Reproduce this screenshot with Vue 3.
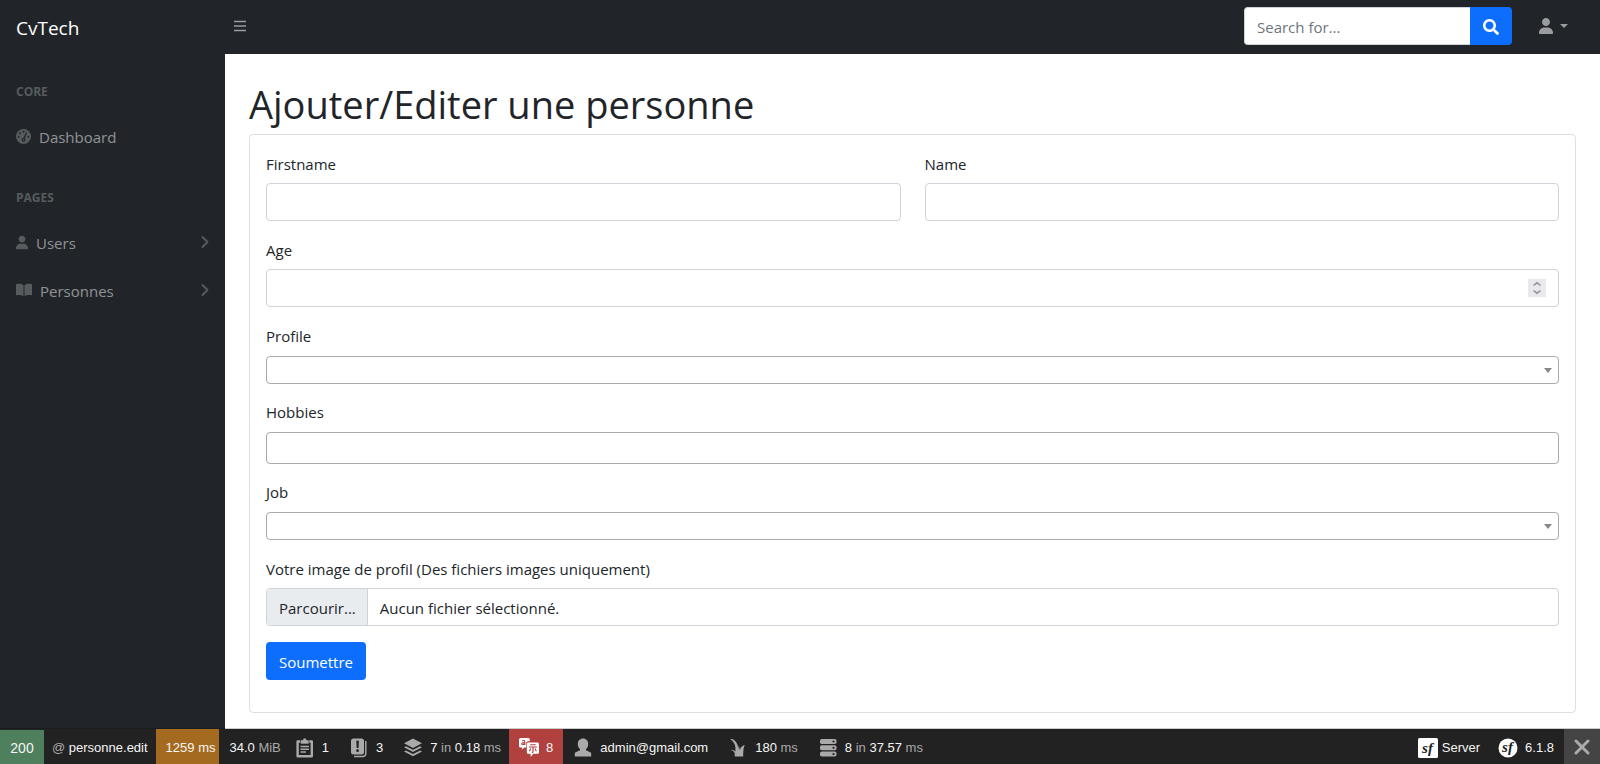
<script setup>
import { ref } from 'vue'

const query = ref('')
const firstname = ref('')
const name = ref('')
const age = ref('')
const profile = ref('')
const hobbies = ref('')
const job = ref('')
</script>

<template>
  <div class="page">
    <header class="topbar">
      <a class="brand" href="#">CvTech</a>
      <button class="menu-toggle" type="button" aria-label="Menu">
        <svg width="12" height="12" viewBox="0 0 12 12"><path d="M0 1.500h12M0 6h12M0 10.500h12" stroke="currentColor" stroke-width="1.400" /></svg>
      </button>
      <form class="search" role="search" @submit.prevent>
        <input v-model="query" type="text" placeholder="Search for..." aria-label="Search for..." />
        <button type="submit" aria-label="Search">
          <svg width="16" height="16" viewBox="0 0 512 512"><path fill="currentColor" d="M505 442.700L405.300 343c-4.500-4.500-10.600-7-17-7H372c27.600-35.300 44-79.700 44-128C416 93.100 322.900 0 208 0S0 93.100 0 208s93.100 208 208 208c48.300 0 92.700-16.400 128-44v16.300c0 6.400 2.500 12.500 7 17l99.700 99.700c9.400 9.400 24.600 9.400 33.900 0l28.300-28.300c9.400-9.400 9.400-24.600.1-34zM208 336c-70.700 0-128-57.200-128-128 0-70.700 57.200-128 128-128 70.700 0 128 57.200 128 128 0 70.700-57.200 128-128 128z" /></svg>
        </button>
      </form>
      <button class="account" type="button" aria-label="Account">
        <svg width="14" height="16" viewBox="0 0 448 512"><path fill="currentColor" d="M224 256c70.700 0 128-57.310 128-128s-57.300-128-128-128C153.300 0 96 57.310 96 128S153.300 256 224 256zM274.700 304H173.300C77.610 304 0 381.600 0 477.300c0 19.140 15.520 34.670 34.660 34.670h378.700C432.500 512 448 496.500 448 477.300C448 381.600 370.400 304 274.700 304z" /></svg>
        <svg class="caret" width="8" height="4" viewBox="0 0 8 4"><path fill="currentColor" d="M0 0h8L4 4z" /></svg>
      </button>
    </header>

    <div class="body">
      <nav class="sidebar">
        <div class="heading">CORE</div>
        <a class="link" href="#">
          <svg width="15" height="15" viewBox="0 0 14 14">
            <circle cx="7" cy="7" r="7" fill="currentColor" />
            <g fill="#212529"><circle cx="7" cy="2.600" r=".9" /><circle cx="3.800" cy="4" r=".9" /><circle cx="2.500" cy="7.200" r=".9" /><circle cx="11.500" cy="7.200" r=".9" /><circle cx="7" cy="10" r="1.800" /></g>
            <path d="M7.200 9.500L9.700 3.800" stroke="#212529" stroke-width="1.200" stroke-linecap="round" />
            <circle cx="7" cy="10" r=".7" fill="currentColor" />
          </svg>
          <span>Dashboard</span>
        </a>
        <div class="heading">PAGES</div>
        <a class="link" href="#">
          <svg width="12" height="15" viewBox="0 0 448 512"><path fill="currentColor" d="M224 256c70.700 0 128-57.310 128-128s-57.300-128-128-128C153.300 0 96 57.310 96 128S153.300 256 224 256zM274.700 304H173.300C77.610 304 0 381.600 0 477.300c0 19.140 15.520 34.670 34.660 34.670h378.700C432.500 512 448 496.500 448 477.300C448 381.600 370.400 304 274.700 304z" /></svg>
          <span>Users</span>
          <svg class="chevron" width="8" height="14" viewBox="0 0 8 14"><path d="M1.500 2L6.500 7L1.500 12" fill="none" stroke="currentColor" stroke-width="1.800" stroke-linecap="round" stroke-linejoin="round" /></svg>
        </a>
        <a class="link" href="#">
          <svg width="16" height="14" viewBox="0 0 16 14"><path fill="currentColor" d="M7.500 2v11C5.700 12.100 3 12 .8 12.200Q0 12.200 0 11.500V1.700Q0 1 .8.900C3 .7 5.700.9 7.500 2zM8.500 2v11c1.800-.9 4.500-1 6.700-.8q.8 0 .8-.7V1.700Q16 1 15.200.9C13 .7 10.300.9 8.500 2z" /></svg>
          <span>Personnes</span>
          <svg class="chevron" width="8" height="14" viewBox="0 0 8 14"><path d="M1.500 2L6.500 7L1.500 12" fill="none" stroke="currentColor" stroke-width="1.800" stroke-linecap="round" stroke-linejoin="round" /></svg>
        </a>
      </nav>

      <main class="content">
        <h1>Ajouter/Editer une personne</h1>
        <form class="card" @submit.prevent>
          <div class="group">
            <div class="columns">
              <div class="field">
                <label for="firstname">Firstname</label>
                <input id="firstname" v-model="firstname" class="control" type="text" />
              </div>
              <div class="field">
                <label for="name">Name</label>
                <input id="name" v-model="name" class="control" type="text" />
              </div>
            </div>
            <div class="field">
              <label for="age">Age</label>
              <div class="control number">
                <input id="age" v-model="age" type="number" />
                <svg class="spinner" width="18" height="18" viewBox="0 0 18 18" aria-hidden="true"><path d="M5.500 6.500L9 3.800L12.500 6.500M5.500 11.500L9 14.200L12.500 11.500" fill="none" stroke="#8f8f9d" stroke-width="1.500" /></svg>
              </div>
            </div>
          </div>
          <div class="group">
            <div class="field">
              <label for="profile">Profile</label>
              <div class="picker">
                <select id="profile" v-model="profile"><option value=""></option></select>
                <svg width="8" height="5" viewBox="0 0 8 5" aria-hidden="true"><path d="M0 0h8L4 5z" fill="#888" /></svg>
              </div>
            </div>
            <div class="field">
              <label for="hobbies">Hobbies</label>
              <input id="hobbies" v-model="hobbies" class="tags" type="text" />
            </div>
            <div class="field">
              <label for="job">Job</label>
              <div class="picker">
                <select id="job" v-model="job"><option value=""></option></select>
                <svg width="8" height="5" viewBox="0 0 8 5" aria-hidden="true"><path d="M0 0h8L4 5z" fill="#888" /></svg>
              </div>
            </div>
            <div class="field">
              <label for="picture">Votre image de profil (Des fichiers images uniquement)</label>
              <label class="control file">
                <input id="picture" type="file" accept="image/*" />
                <span class="browse">Parcourir...</span>
                <span class="chosen">Aucun fichier sélectionné.</span>
              </label>
            </div>
            <button class="submit" type="submit">Soumettre</button>
          </div>
        </form>
      </main>
    </div>

    <footer class="toolbar">
      <a class="status" href="#">200</a>
      <a class="block tight" href="#"><span><i>@</i> personne.edit</span></a>
      <a class="block plain time" href="#">1259 ms</a>
      <a class="block plain" href="#"><span>34.0 <i>MiB</i></span></a>
      <a class="block" href="#">
        <svg width="24" height="24" viewBox="0 0 24 24">
          <path d="M4.600 5.500h14.200v14.700H4.600z" fill="none" stroke="#aaa" stroke-width="2.400" stroke-linejoin="round" />
          <path d="M7.500 4h2.300q0-2 1.900-2t1.900 2h2.300v4H7.500z" fill="#aaa" stroke="#222" stroke-width=".6" />
          <path d="M7.500 10.500h8.400M7.500 13.300h8.400M7.500 16.100h5.500" stroke="#aaa" stroke-width="1.500" />
        </svg>
        <span>1</span>
      </a>
      <a class="block" href="#">
        <svg width="24" height="24" viewBox="0 0 24 24">
          <rect x="4" y="2.500" width="13" height="16" rx="2.500" fill="#aaa" />
          <path d="M18.800 5v12.500q0 3-3 3H7" fill="none" stroke="#aaa" stroke-width="1.400" />
          <path d="M9.300 4.800h2.600l-.4 7.200h-1.800z" fill="#222" /><circle cx="10.600" cy="14.700" r="1.400" fill="#222" />
        </svg>
        <span>3</span>
      </a>
      <a class="block tight" href="#">
        <svg width="24" height="24" viewBox="0 0 24 24" fill="#aaa">
          <path d="M12 2.500l9 4.700l-9 4.700l-9-4.700z" /><path d="M3 11.300l2-1.100l7 3.600l7-3.600l2 1.100l-9 4.700z" /><path d="M3 15.600l2-1.100l7 3.600l7-3.600l2 1.100l-9 4.700z" />
        </svg>
        <span>7 <i>in</i> 0.18 <i>ms</i></span>
      </a>
      <a class="block alert" href="#">
        <svg width="24" height="24" viewBox="0 0 24 24">
          <path d="M3.500 2h7.800q1.500 0 1.500 1.500v1.800h-1.600q-2 0-2 2v4.200H7.400L5 13.600v-2.100H3.500Q2 11.500 2 10V3.500Q2 2 3.500 2z" fill="#fff" />
          <path d="M11.300 6.500h9.200q1.500 0 1.500 1.500v8.200q0 1.500-1.500 1.500h-4.200l-2.700 3.300v-3.300h-2.300q-1.500 0-1.500-1.500V8q0-1.500 1.500-1.500z" fill="#fff" />
          <path d="M5 5q2.800-1.400 2.800 1.200v2.700M7.800 6.600Q4.500 6.600 4.700 8t3-.1M13.200 8.800h5.500M11.900 11h8M16 11v5q0 .6-1.200.3M13.800 12.500l-1.400 2.700M18 12.500l1.400 2.700" fill="none" stroke="#b0413e" stroke-width="1.100" />
        </svg>
        <span>8</span>
      </a>
      <a class="block" href="#">
        <svg width="24" height="24" viewBox="0 0 24 24"><path fill="#aaa" d="M12 2.500c3.200 0 5.200 2.300 5.200 5.500 0 2.300-.9 4.100-2.200 5.100v1.200l4.300 1.900q.9.400.9 1.500v2.800H3.800v-2.800q0-1.100.9-1.500L9 14.300v-1.200C7.700 12.100 6.800 10.300 6.800 8c0-3.200 2-5.500 5.200-5.500z" /></svg>
        <span>admin@gmail.com</span>
      </a>
      <a class="block" href="#">
        <svg width="24" height="24" viewBox="0 0 24 24"><path fill="#aaa" d="M4.300 3.200Q6.500 2.600 8.300 4.300Q12 7.300 12.200 13q.4-1.500.1-3.500q1.300 1.700 1.500 5.300q.6-4.600 5.100-5.700q-1.500 2-1.700 8.400v3H8.700v-3.200q-1-3-4.400-3.400q3.200-.9 5.200 1.700Q10.300 6.500 4.300 3.200z" /></svg>
        <span>180 <i>ms</i></span>
      </a>
      <a class="block" href="#">
        <svg width="24" height="24" viewBox="0 0 24 24">
          <g fill="#aaa"><rect x="4" y="3" width="16.500" height="5" rx="1.800" /><rect x="4" y="9.300" width="16.500" height="5" rx="1.800" /><rect x="4" y="15.600" width="16.500" height="5" rx="1.800" /></g>
          <g fill="#222"><circle cx="17.500" cy="5.500" r="1.100" /><circle cx="17.500" cy="11.800" r="1.100" /><circle cx="17.500" cy="18.100" r="1.100" /></g>
        </svg>
        <span>8 <i>in</i> 37.57 <i>ms</i></span>
      </a>
      <a class="block tight server" href="#">
        <svg width="20" height="20" viewBox="0 0 20 20"><rect width="20" height="20" rx="1.500" fill="#fff" /><text x="9.500" y="14.500" text-anchor="middle" class="mark">sf</text></svg>
        <span>Server</span>
      </a>
      <a class="block" href="#">
        <svg width="24" height="24" viewBox="0 0 24 24"><circle cx="12" cy="12" r="9.500" fill="#fff" /><text x="11.500" y="16" text-anchor="middle" class="mark">sf</text></svg>
        <span>6.1.8</span>
      </a>
      <button class="close" type="button" aria-label="Close">
        <svg width="16" height="16" viewBox="0 0 16 16"><path d="M2 2l12 12M14 2L2 14" stroke="#aaa" stroke-width="3" stroke-linecap="round" /></svg>
      </button>
    </footer>
  </div>
</template>

<style>
body {
  margin: 0;
}
</style>

<style scoped>
* {
  box-sizing: border-box;
}
.page {
  display: flex;
  flex-direction: column;
  min-height: 100vh;
  font-family: "Open Sans", "Noto Sans", sans-serif;
  font-size: 15px;
  line-height: 24px;
  color: #212529;
  background: #fff;
}
a {
  color: inherit;
  text-decoration: none;
}
button,
input,
select {
  font: inherit;
  color: inherit;
  margin: 0;
}
button {
  border: 0;
  cursor: pointer;
}
svg {
  display: block;
  flex: none;
}
.topbar {
  display: flex;
  align-items: center;
  height: 54px;
  padding: 0 24px 2px 0;
  background: #212529;
  color: rgba(255, 255, 255, 0.55);
}
.brand {
  width: 225px;
  padding: 4px 0 0 16px;
  font-size: 19px;
  color: #fff;
}
.menu-toggle {
  padding: 8px 9px;
  background: none;
}
.search {
  display: flex;
  width: 268px;
  height: 38px;
  margin: 0 16px 0 auto;
}
.search input {
  flex: 1;
  min-width: 0;
  padding: 2px 12px 0;
  border: 1px solid #ced4da;
  border-right: 0;
  border-radius: 4px 0 0 4px;
  background: #fff;
  color: #212529;
}
.search input::placeholder {
  color: #6c757d;
  opacity: 1;
}
.search button {
  display: flex;
  align-items: center;
  justify-content: center;
  width: 42px;
  padding: 2px 0 0;
  border-radius: 0 4px 4px 0;
  background: #0d6efd;
  color: #fff;
}
.account {
  display: flex;
  align-items: center;
  gap: 7px;
  padding: 8px 8px 8px 11px;
  background: none;
}
.body {
  display: flex;
  flex: 1;
}
.sidebar {
  flex: none;
  width: 225px;
  background: #212529;
}
.heading {
  padding: 29px 16px 11px;
  font-size: 12px;
  line-height: 18px;
  font-weight: 700;
  color: rgba(255, 255, 255, 0.25);
}
.link {
  display: flex;
  align-items: center;
  gap: 8px;
  height: 48px;
  padding: 0 16px;
  color: rgba(255, 255, 255, 0.5);
}
.link span {
  padding-top: 2px;
}
.link svg {
  color: rgba(255, 255, 255, 0.25);
}
.link .chevron {
  margin-left: auto;
}
.content {
  flex: 1;
  min-width: 0;
  padding: 26px 24px 16px;
}
h1 {
  margin: 0 0 6px;
  font-size: 38px;
  line-height: 48px;
  font-weight: 400;
}
.card {
  display: flex;
  flex-direction: column;
  gap: 17px;
  padding: 16px 16px 32px;
  border: 1px solid rgba(0, 0, 0, 0.125);
  border-radius: 4px;
}
.group {
  display: flex;
  flex-direction: column;
  gap: 16px;
}
.columns {
  display: grid;
  grid-template-columns: 1fr 1fr;
  gap: 24px;
}
.field {
  display: flex;
  flex-direction: column;
  gap: 8px;
  min-width: 0;
}
.field > label:has(+ .control) {
  margin-bottom: -2px;
  line-height: 26px;
}
.control {
  width: 100%;
  height: 38px;
  padding: 0 12px;
  border: 1px solid #ced4da;
  border-radius: 4px;
  background: #fff;
}
.number {
  display: flex;
  align-items: center;
}
.number input {
  flex: 1;
  min-width: 0;
  padding: 0;
  border: 0;
  outline: 0;
  appearance: textfield;
}
.spinner {
  background: #e9e9ed;
}
.picker {
  display: grid;
  align-items: center;
}
.picker select,
.picker svg {
  grid-area: 1 / 1;
}
.picker select {
  width: 100%;
  height: 28px;
  padding: 0 20px 0 8px;
  border: 1px solid #aaa;
  border-radius: 4px;
  background: #fff;
  appearance: none;
}
.picker svg {
  justify-self: end;
  margin-right: 7px;
  pointer-events: none;
}
.tags {
  width: 100%;
  height: 32px;
  padding: 0 8px;
  border: 1px solid #aaa;
  border-radius: 4px;
}
.file {
  position: relative;
  display: flex;
  padding: 0;
  overflow: hidden;
  line-height: 38px;
}
.file input {
  position: absolute;
  inset: 0;
  opacity: 0;
}
.browse {
  padding: 0 11px 0 12px;
  border-right: 1px solid #ced4da;
  background: #e9ecef;
}
.chosen {
  padding: 0 12px;
}
.submit {
  align-self: flex-start;
  height: 38px;
  padding: 2px 13px 0;
  border-radius: 4px;
  background: #0d6efd;
  color: #fff;
}
.toolbar {
  display: flex;
  height: 35px;
  background: #222;
  box-shadow: 0 -1px 0 rgba(0, 0, 0, 0.2);
  font-family: "Liberation Sans", Arial, sans-serif;
  font-size: 13px;
  color: #f5f5f5;
  white-space: nowrap;
}
.toolbar i {
  font-style: normal;
  color: #aaa;
}
.status {
  display: flex;
  align-items: center;
  justify-content: center;
  align-self: flex-end;
  width: 44px;
  height: 34px;
  padding-top: 2px;
  background: #4f805d;
  font-size: 14px;
}
.block {
  display: flex;
  align-items: center;
  gap: 5px;
  padding: 2px 10px 0 8px;
}
.tight {
  padding-right: 8px;
}
.plain {
  padding: 2px 4px 0 10px;
}
.time {
  background: #a46a1f;
}
.alert {
  background: #b0413e;
}
.server {
  gap: 4px;
  margin-left: auto;
}
.mark {
  font: italic 700 15px "Liberation Serif", serif;
  fill: #222;
}
.close {
  display: flex;
  align-items: center;
  justify-content: center;
  width: 36px;
  padding: 0;
  background: #444;
}
</style>
